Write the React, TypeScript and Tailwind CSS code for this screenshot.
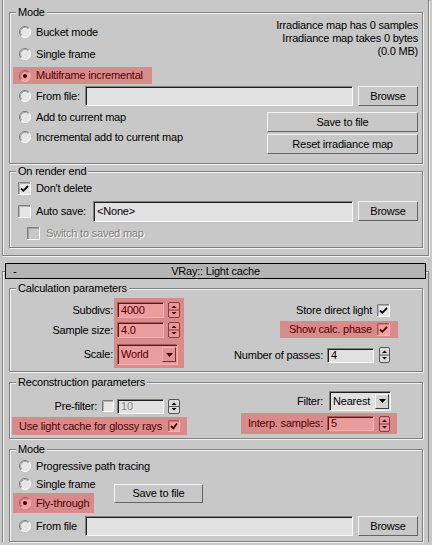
import React from "react";

type P = { className?: string; children?: React.ReactNode };

function cx(...a: (string | false | undefined)[]) {
  return a.filter(Boolean).join(" ");
}

function Radio({ checked = false }: { checked?: boolean }) {
  return (
    <svg width="12" height="12" viewBox="0 0 12 12" className="block shrink-0">
      <circle cx="6" cy="6" r="5.5" fill="#e6e6e6" />
      <path d="M2.11 9.89 A5.5 5.5 0 0 1 9.89 2.11" fill="none" stroke="#7a7a7a" strokeWidth="1" />
      <path d="M9.89 2.11 A5.5 5.5 0 0 1 2.11 9.89" fill="none" stroke="#ffffff" strokeWidth="1" />
      <path d="M2.82 9.18 A4.5 4.5 0 0 1 9.18 2.82" fill="none" stroke="#a4a4a4" strokeWidth="1" />
      {checked && <circle cx="6" cy="6" r="2" fill="#000" />}
    </svg>
  );
}

function Check({ checked = false, disabled = false, size = 13 }: { checked?: boolean; disabled?: boolean; size?: number }) {
  const s = size;
  return (
    <svg width={s} height={s} viewBox={`0 0 ${s} ${s}`} className="block shrink-0">
      <rect x="0" y="0" width={s} height={s} fill={disabled ? "#c8c8c8" : "#e6e6e6"} />
      <path d={`M0.5 ${s} V0.5 H${s}`} stroke="#808080" fill="none" />
      <path d={`M1.5 ${s - 1} V1.5 H${s - 1}`} stroke={disabled ? "#a0a0a0" : "#b0b0b0"} fill="none" />
      <path d={`M${s - 0.5} 0 V${s - 0.5} H0`} stroke="#ffffff" fill="none" />
      {checked && <path d={`M3 ${s / 2} L5.3 ${s / 2 + 2.3} L${s - 3} ${s / 2 - 2.5}`} stroke="#000" strokeWidth="1.8" fill="none" />}
    </svg>
  );
}

function Spinner({ w = 12, h = 16 }: { w?: number; h?: number }) {
  const c = w / 2;
  return (
    <svg width={w} height={h} viewBox={`0 0 ${w} ${h}`} className="block shrink-0">
      <rect x="0.5" y="0.5" width={w - 1} height={h - 1} rx="1.5" fill="#dcdcdc" stroke="#555" />
      <line x1="1" y1={h / 2} x2={w - 1} y2={h / 2} stroke="#555" />
      <path d={`M${c} 3.5 L${c + 2.5} 6 L${c - 2.5} 6 Z`} fill="#000" />
      <path d={`M${c - 2.5} ${h - 6} L${c + 2.5} ${h - 6} L${c} ${h - 3.5} Z`} fill="#000" />
    </svg>
  );
}

function Field({ className, children, muted }: P & { muted?: boolean }) {
  return (
    <div
      className={cx(
        "flex items-center overflow-hidden whitespace-nowrap bg-[#e1e1e1] pl-[3px] border border-t-[#808080] border-l-[#808080] border-b-[#f8f8f8] border-r-[#f8f8f8] shadow-[inset_1px_1px_0_#1e1e1e]",
        muted && "text-[#8a8a8a]",
        className
      )}
    >
      {children}
    </div>
  );
}

function Btn({ className, children }: P) {
  return (
    <div
      className={cx(
        "flex items-center justify-center whitespace-nowrap bg-[#c8c8c8] border border-t-[#f4f4f4] border-l-[#f4f4f4] border-b-[#646464] border-r-[#646464]",
        className
      )}
    >
      {children}
    </div>
  );
}

function Combo({ value, className }: { value: string; className?: string }) {
  return (
    <Field className={cx("justify-between pr-[1px]", className)}>
      <span>{value}</span>
      <div className="flex h-[15px] w-[14px] items-center justify-center border border-t-[#f4f4f4] border-l-[#f4f4f4] border-b-[#404040] border-r-[#404040] bg-[#d4d4d4]">
        <svg width="7" height="4" viewBox="0 0 7 4" className="block">
          <path d="M0 0 H7 L3.5 4 Z" fill="#000" />
        </svg>
      </div>
    </Field>
  );
}

function Hl({ className, children }: P) {
  return (
    <div className={cx("relative", className)}>
      {children}
      <div className="pointer-events-none absolute inset-0 bg-[rgba(255,0,0,0.3)]" />
    </div>
  );
}

function Group({ title, className, children }: P & { title: string }) {
  return (
    <div className={cx("relative border border-[#808080] shadow-[inset_1px_1px_0_#f2f2f2,1px_1px_0_#f2f2f2]", className)}>
      <span className="absolute -top-[7px] left-[6px] bg-[#c8c8c8] px-[2px] leading-[13px]">{title}</span>
      {children}
    </div>
  );
}

function RadioRow({ label, checked, className }: { label: string; checked?: boolean; className?: string }) {
  return (
    <div className={cx("flex items-center whitespace-nowrap pl-[6px]", className)}>
      <Radio checked={checked} />
      <span className="ml-[5px]">{label}</span>
    </div>
  );
}

export default function App() {
  return (
    <div className="h-[545px] w-[432px] overflow-hidden bg-[#c8c8c8] font-['Liberation_Sans',Arial,sans-serif] text-[11px] leading-[13px] tracking-[-0.2px] text-black">
      {/* Irradiance map rollout (continued) */}
      <div className="ml-[2px] mr-[3px] border-x border-b border-[#808080] pb-[7px] pl-[6px] pr-[5px] pt-[12px] shadow-[inset_1px_0_0_#f2f2f2,1px_1px_0_#f2f2f2]">
        <Group title="Mode" className="h-[152px]">
          <div className="flex h-[73px]">
            <div className="ml-[3px] flex flex-col pt-[9px]">
              <RadioRow label="Bucket mode" className="h-[20px]" />
              <RadioRow label="Single frame" className="mt-[2px] h-[20px]" />
              <Hl className="mt-[3px] flex h-[17px] w-[139px]">
                <RadioRow label="Multiframe incremental" checked className="h-[17px]" />
              </Hl>
            </div>
            <div className="flex-1 pr-[4px] pt-[6px] text-right">
              <div>Irradiance map has 0 samples</div>
              <div>Irradiance map takes 0 bytes</div>
              <div>(0.0 MB)</div>
            </div>
          </div>
          <div className="flex h-[20px] items-center pr-[4px]">
            <div className="ml-[3px] flex items-center pl-[6px]">
              <Radio />
              <span className="ml-[5px] w-[49px] whitespace-nowrap">From file:</span>
            </div>
            <Field className="h-[20px] flex-1" />
            <Btn className="ml-[5px] h-[20px] w-[60px]">Browse</Btn>
          </div>
          <div className="flex h-[48px]">
            <div className="ml-[3px] flex flex-col pt-[1px]">
              <RadioRow label="Add to current map" className="h-[20px]" />
              <RadioRow label="Incremental add to current map" className="h-[20px]" />
            </div>
            <div className="ml-auto flex flex-col gap-[2px] pr-[4px] pt-[6px]">
              <Btn className="h-[20px] w-[151px]">Save to file</Btn>
              <Btn className="h-[20px] w-[151px]">Reset irradiance map</Btn>
            </div>
          </div>
        </Group>

        <Group title="On render end" className="mt-[7px] h-[77px]">
          <div className="pr-[4px] pt-[6px]">
            <div className="flex h-[20px] items-center pl-[8px]">
              <Check checked />
              <span className="ml-[5px]">Don't delete</span>
            </div>
            <div className="mt-[2px] flex h-[22px] items-center pl-[8px]">
              <Check />
              <span className="ml-[5px] w-[57px] whitespace-nowrap">Auto save:</span>
              <Field className="h-[21px] flex-1">&lt;None&gt;</Field>
              <Btn className="ml-[5px] h-[20px] w-[60px]">Browse</Btn>
            </div>
            <div className="mt-[1px] flex h-[20px] items-center pl-[17px] text-[#808080] [text-shadow:1px_1px_0_#ffffff]">
              <Check disabled />
              <span className="ml-[6px]">Switch to saved map</span>
            </div>
          </div>
        </Group>
      </div>

      {/* Light cache rollout header */}
      <div className="relative z-10 -mb-[8px] ml-[5px] mr-[6px] mt-[7px] grid h-[16px] grid-cols-[24px_1fr_24px] items-center border border-black bg-[#b4b4b4]">
        <span className="pl-[7px]">-</span>
        <span className="text-center">VRay:: Light cache</span>
        <span />
      </div>

      {/* Light cache rollout body */}
      <div className="ml-[2px] mr-[3px] border-x border-t border-[#808080] pl-[6px] pr-[5px] pt-[16px] shadow-[inset_1px_1px_0_#f2f2f2]">
        <Group title="Calculation parameters" className="h-[84px]">
          <div className="flex">
            <div className="flex">
              <div className="flex w-[104px] flex-col items-end pr-[1px] pt-[13px]">
                <div className="flex h-[16px] items-center">Subdivs:</div>
                <div className="mt-[4px] flex h-[16px] items-center">Sample size:</div>
                <div className="mt-[6px] flex h-[21px] items-center">Scale:</div>
              </div>
              <Hl className="mt-[9px] h-[70px] w-[70px] pl-[3px] pt-[4px]">
                <div className="flex h-[16px]">
                  <Field className="h-[16px] w-[47px]">4000</Field>
                  <div className="ml-[4px]">
                    <Spinner />
                  </div>
                </div>
                <div className="mt-[4px] flex h-[16px]">
                  <Field className="h-[16px] w-[47px]">4.0</Field>
                  <div className="ml-[4px]">
                    <Spinner />
                  </div>
                </div>
                <div className="mt-[6px]">
                  <Combo value="World" className="h-[21px] w-[61px]" />
                </div>
              </Hl>
            </div>
            <div className="flex flex-1 flex-col items-end pr-[24px] pt-[11px]">
              <div className="flex h-[20px] items-center pr-[8px]">
                <span>Store direct light</span>
                <span className="ml-[5px]">
                  <Check checked />
                </span>
              </div>
              <Hl className="mt-[1px] flex h-[17px] w-[118px] items-center justify-end pr-[8px]">
                <span className="whitespace-nowrap">Show calc. phase</span>
                <span className="ml-[5px]">
                  <Check checked />
                </span>
              </Hl>
              <div className="mt-[8px] flex h-[18px] items-center pr-[8px]">
                <span>Number of passes:</span>
                <Field className="ml-[4px] h-[15px] w-[47px]">4</Field>
                <span className="ml-[5px]">
                  <Spinner w={11} h={16} />
                </span>
              </div>
            </div>
          </div>
        </Group>

        <Group title="Reconstruction parameters" className="mt-[10px] h-[57px]">
          <div className="flex">
            <div className="ml-[2px] w-[175px] pt-[15px]">
              <div className="flex h-[16px] items-center justify-end pr-[7px]">
                <span>Pre-filter:</span>
                <span className="ml-[5px]">
                  <Check size={12} />
                </span>
                <Field muted className="ml-[3px] h-[15px] w-[47px]">
                  10
                </Field>
                <span className="ml-[4px]">
                  <Spinner h={15} />
                </span>
              </div>
              <Hl className="mt-[3px] flex h-[18px] items-center justify-between pl-[7px] pr-[7px]">
                <span className="whitespace-nowrap">Use light cache for glossy rays</span>
                <Check checked size={12} />
              </Hl>
            </div>
            <div className="flex flex-1 flex-col items-end pr-[25px] pt-[8px]">
              <div className="flex h-[20px] items-center pr-[6px]">
                <span>Filter:</span>
                <Combo value="Nearest" className="ml-[6px] h-[20px] w-[62px]" />
              </div>
              <Hl className="mt-[2px] flex h-[21px] w-[156px] items-center justify-end pr-[7px]">
                <span className="whitespace-nowrap">Interp. samples:</span>
                <Field className="ml-[4px] h-[15px] w-[47px]">5</Field>
                <span className="ml-[5px]">
                  <Spinner w={11} h={16} />
                </span>
              </Hl>
            </div>
          </div>
        </Group>

        <Group title="Mode" className="mt-[10px] h-[93px]">
          <div className="flex h-[63px]">
            <div className="ml-[3px] flex w-[81px] flex-col pt-[7px]">
              <RadioRow label="Progressive path tracing" className="h-[18px]" />
              <RadioRow label="Single frame" className="h-[18px]" />
              <Hl className="flex h-[20px]">
                <RadioRow label="Fly-through" checked className="h-[20px]" />
              </Hl>
            </div>
            <div className="ml-[20px] pt-[34px]">
              <Btn className="h-[19px] w-[89px]">Save to file</Btn>
            </div>
          </div>
          <div className="mt-[3px] flex h-[20px] items-center pr-[4px]">
            <div className="ml-[3px] flex items-center pl-[6px]">
              <Radio />
              <span className="ml-[5px] w-[49px] whitespace-nowrap">From file</span>
            </div>
            <Field className="h-[20px] flex-1" />
            <Btn className="ml-[5px] h-[20px] w-[60px]">Browse</Btn>
          </div>
        </Group>
      </div>
    </div>
  );
}
